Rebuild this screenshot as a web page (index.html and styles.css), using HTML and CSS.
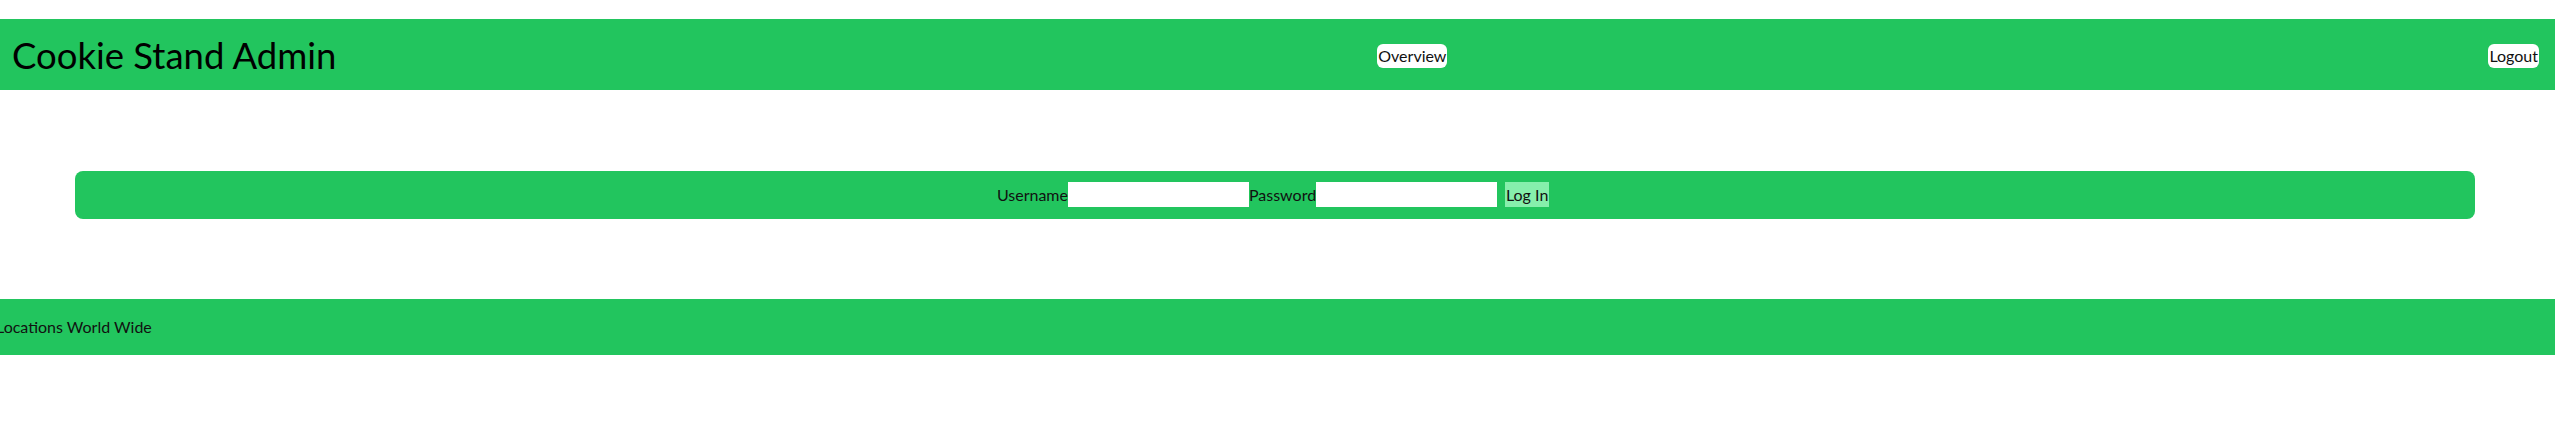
FILE: index.html
```html
<!DOCTYPE html>
<html lang="en">
<head>
<meta charset="utf-8">
<title>Cookie Stand Admin</title>
<link rel="stylesheet" href="styles.css">
</head>
<body>
  <header class="topbar">
    <h1 class="title">Cookie Stand Admin</h1>
    <button class="pill">Overview</button>
    <button class="pill">Logout</button>
  </header>
  <main class="content">
    <form class="login">
      <label class="lbl">Username</label><input class="field" type="text">
      <label class="lbl">Password</label><input class="field" type="password">
      <button class="submit" type="button">Log In</button>
    </form>
  </main>
  <footer class="footer">
    <p class="foot-text">Locations World Wide</p>
  </footer>
</body>
</html>
```
FILE: styles.css
```css
* { box-sizing: border-box; }
html, body { margin: 0; padding: 0; background: #fff; }
body {
  font-family: Lato, "Noto Sans", sans-serif;
  color: #000;
  padding-top: 19px;
}
.topbar {
  display: flex;
  justify-content: space-between;
  align-items: center;
  background: #22c55e;
  height: 71px;
  padding: 0 16px 0 12px;
}
.title {
  margin: 0;
  font-weight: 400;
  font-size: 36.5px;
  line-height: 40px;
}
.pill {
  background: #fff;
  border: none;
  border-radius: 6px;
  font-family: inherit;
  font-size: 16px;
  line-height: 24px;
  height: 24px;
  padding: 0 1px;
  color: #111;
  margin-top: 2px;
  white-space: nowrap;
}
.content {
  padding: 81px 80px 80px 75px;
}
.login {
  display: flex;
  justify-content: center;
  align-items: center;
  background: #22c55e;
  border-radius: 8px;
  height: 48px;
  padding: 0 4px 2px 0;
  margin: 0;
  font-size: 16px;
  color: #111;
}
.lbl { line-height: 25px; white-space: nowrap; }
.field {
  width: 181px;
  height: 25px;
  border: none;
  padding: 0;
  background: #fff;
}
.submit {
  margin-left: 8px;
  height: 25px;
  width: 44px;
  padding: 0;
  border: none;
  background: #86efac;
  font-family: inherit;
  font-size: 16px;
  color: #111;
  white-space: nowrap;
}
.footer {
  background: #22c55e;
  height: 56px;
  display: flex;
  align-items: center;
}
.foot-text {
  margin: 0;
  font-size: 16px;
  line-height: 24px;
  text-indent: -4px;
  color: #111;
  white-space: nowrap;
}
```
